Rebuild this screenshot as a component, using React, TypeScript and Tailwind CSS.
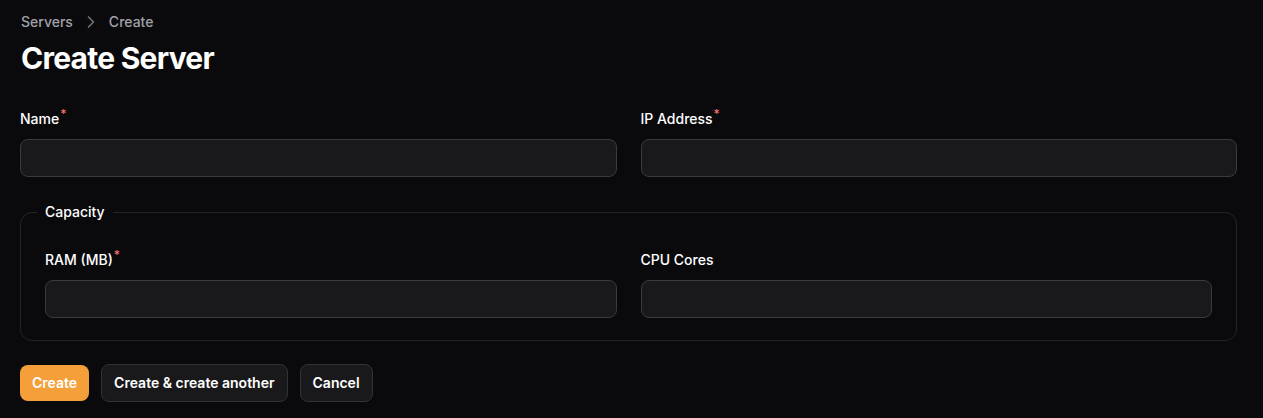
import { ChevronRight } from 'lucide-react';

function Label({ text, required }: { text: string; required?: boolean }) {
  return (
    <label className="block text-sm leading-6 font-medium text-white">
      {text}
      {required && <span className="relative -top-[6px] ml-[1px] text-xs leading-none font-medium text-[#f87171]">*</span>}
    </label>
  );
}

function Field({ label, required }: { label: string; required?: boolean }) {
  return (
    <div className="flex flex-col gap-2">
      <Label text={label} required={required} />
      <input
        type="text"
        className="h-[38px] w-full rounded-lg border border-[#3b3b3e] bg-[#19191b] px-3 text-sm text-white outline-none"
      />
    </div>
  );
}

export default function App() {
  return (
    <div
      className="min-h-[418px] bg-[#0a0a0c] text-white"
      style={{ fontFamily: 'Inter, "Noto Sans", sans-serif' }}
    >
      <div className="w-[1237px] pl-5 pt-[12px]">
        {/* Breadcrumbs */}
        <nav className="flex items-center gap-2 pl-[1px] text-sm leading-5 font-medium text-[#a1a1aa]">
          <span>Servers</span>
          <ChevronRight className="w-5 h-5 text-[#71717a]" strokeWidth={2} />
          <span>Create</span>
        </nav>

        <h1 className="mt-[8px] pl-[1px] text-[30px] leading-9 font-bold tracking-tight text-white">
          Create Server
        </h1>

        <form className="mt-[31px] flex flex-col gap-6">
          <div className="grid grid-cols-2 gap-6">
            <Field label="Name" required />
            <Field label="IP Address" required />
          </div>

          <fieldset className="-mt-[1px] rounded-xl border border-[#242427] px-6 pb-[22px] pt-6">
            <legend className="-ml-2 px-2 text-sm leading-6 font-medium text-white">Capacity</legend>
            <div className="grid grid-cols-2 gap-6">
              <Field label="RAM (MB)" required />
              <Field label="CPU Cores" />
            </div>
          </fieldset>

          <div className="-mt-[1px] flex items-center gap-3">
            <button
              type="button"
              className="h-9 rounded-lg bg-[#f59f3b] px-3 text-sm font-semibold text-white"
            >
              Create
            </button>
            <button
              type="button"
              className="h-[38px] rounded-lg border border-[#333336] bg-[#19191b] px-3 text-sm font-semibold text-white"
            >
              Create &amp; create another
            </button>
            <button
              type="button"
              className="h-[38px] rounded-lg border border-[#333336] bg-[#19191b] px-3 text-sm font-semibold text-white"
            >
              Cancel
            </button>
          </div>
        </form>
      </div>
    </div>
  );
}
